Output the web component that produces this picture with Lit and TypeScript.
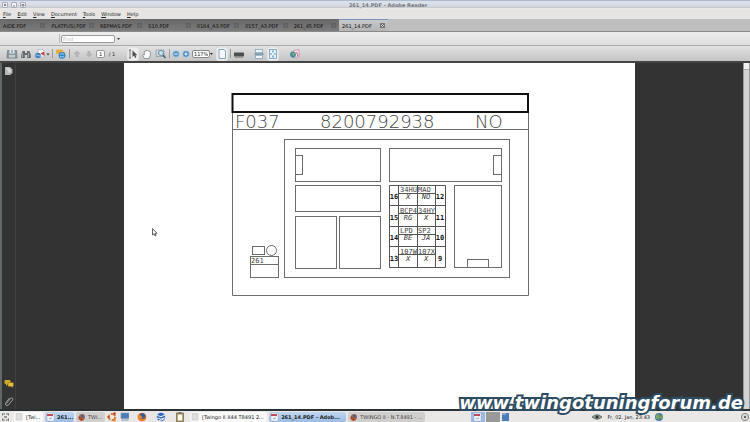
import { LitElement, html, css, svg, nothing } from "lit";
import { customElement, property } from "lit/decorators.js";
import { classMap } from "lit/directives/class-map.js";

const icon = (body: unknown, w = 12) =>
  html`<svg class="icon" width=${w} height="12" viewBox="0 0 ${w} 12" aria-hidden="true">${body}</svg>`;

const pdfIcon = svg`<rect x="2" y="2" width="7" height="8" fill="#eef1f8" stroke="#a9b4c8" stroke-width=".5"/><rect x="2" y="3" width="6" height="2" fill="#c0495a"/><path d="M4 8l3-1" stroke="#99a" stroke-width=".8"/>`;
const blankIcon = svg`<rect x="2" y="2.500" width="6" height="6.500" fill="#dedede" stroke="#c5c5c5" stroke-width=".6"/>`;
const firefoxDim = svg`<circle cx="6" cy="6" r="3" fill="#8d6a60"/><path d="M3 5a3 3 0 0 0 5 3.500L6 7z" fill="#b04a30"/><circle cx="6.500" cy="5" r="1.300" fill="#59627c"/>`;

const art = {
  save: svg`<path d="M1.500 2.500h9l.5 7.500h-10z" fill="#8e999e" stroke="#69757a" stroke-width=".7"/><rect x="3.500" y="2" width="5" height="3.500" fill="#dfe8ea"/><rect x="3" y="7" width="6" height="2.500" fill="#c3cdd0"/><path d="M6 2v3" stroke="#5f7480" stroke-width=".9"/>`,
  find: svg`<path d="M2.500 3h2.500v2h2V3h2.500l1.300 4v3H7.200V7H4.800v3H1.200V7z" fill="#636b6f"/><path d="M2.500 5v4M8.500 5v4" stroke="#b2b9bc" stroke-width=".8"/>`,
  send: svg`<path d="M4 1.500h5l1.500 2V9H4z" fill="#f3f4f6" stroke="#9aa7ba" stroke-width=".6"/><circle cx="4" cy="7.500" r="2.800" fill="#3e82c4"/><path d="M6.500 5.500l3.500-2 .5 4.500z" fill="#cf3b35"/><path d="M2 7l4 1" stroke="#a7d0ef" stroke-width=".8"/><path d="M12.500 5.500h3l-1.500 2z" fill="#333"/>`,
  share: svg`<rect x="1" y="1.500" width="7" height="4.500" rx="1" fill="#e7ad40"/><path d="M8 3l2.500 2L8 7z" fill="#e7ad40"/><circle cx="7" cy="7.300" r="3.400" fill="#3585c6"/><path d="M5 6.500q2-2 4 0M5 8.500q2 1 4 0" stroke="#acd8f4" stroke-width=".9" fill="none"/>`,
  up: svg`<path d="M5 2.500l3.500 3.500h-2v3h-3V6h-2z" fill="#b4b4b4"/>`,
  down: svg`<path d="M5 9.500L8.500 6h-2V3h-3v3h-2z" fill="#b4b4b4"/>`,
  select: svg`<path d="M3 2v8M1.800 2h2.400M1.800 10h2.400" stroke="#555" stroke-width=".8"/><path d="M5.500 2.500v6.500l1.500-1.400 1.200 2.400 1.200-.7-1.100-2.100h2z" fill="#4a4a4a"/>`,
  hand: svg`<path d="M3.500 10.500L1.500 7q.5-1.300 1.800 0V3.500q.9-1.200 1.500 0 0-1.800 1.500-1 1.200-.6 1.500.8 1.500-.4 1.500 1v3.200l-1.300 3z" fill="#fafafa" stroke="#777" stroke-width=".7"/>`,
  marquee: svg`<rect x="1" y="2" width="8" height="6.500" fill="none" stroke="#6a8899" stroke-dasharray="1.500 .7" stroke-width=".8"/><circle cx="6" cy="5" r="2.500" fill="#cce4f0" stroke="#527b94" stroke-width=".8"/><path d="M8 7l2.500 3" stroke="#486578" stroke-width="1.400"/>`,
  minus: svg`<circle cx="4" cy="6" r="3.300" fill="#4c8fc5" stroke="#b4d2e6" stroke-width=".8"/><path d="M2.300 6h3.400" stroke="#fff"/>`,
  plus: svg`<circle cx="4" cy="6" r="3.300" fill="#3e83bd" stroke="#b4d2e6" stroke-width=".8"/><path d="M2.300 6h3.400M4 4.300v3.400" stroke="#fff"/>`,
  page: svg`<path d="M3 1.500h5l1.500 1.500v7.500H3z" fill="#f2f8fd" stroke="#678fae" stroke-width=".8"/>`,
  print: svg`<rect x="3" y="2" width="6" height="3" fill="#d5d5d5"/><rect x="1" y="4.500" width="10" height="4" rx=".6" fill="#4c4f50"/><path d="M2 9.300h8" stroke="#8b8b8b" stroke-width="1"/>`,
  scroll: svg`<rect x="2.500" y="1.500" width="7" height="3.200" fill="#eef5fa" stroke="#7b9eb8" stroke-width=".7"/><path d="M1.500 6h9" stroke="#567f9f" stroke-width="1.200"/><rect x="2.500" y="7.300" width="7" height="3.200" fill="#eef5fa" stroke="#7b9eb8" stroke-width=".7"/>`,
  fit: svg`<rect x="2.500" y="1.500" width="7" height="9" fill="#e7f2fa" stroke="#7299b7" stroke-width=".8"/><path d="M6 2.500v2M6 7.500v2M3.300 6h1.500M7.200 6h1.500" stroke="#3f7faf" stroke-width="1.100"/>`,
  adobe: svg`<path d="M4 3l6-1.500v7L4 10z" fill="#f6e7ef" stroke="#c8809b" stroke-width=".7"/><circle cx="4" cy="6.500" r="2.900" fill="#4286a5"/><path d="M3 4.500l3 1-2 3" fill="#91b95b"/><path d="M7.500 4l1.500 4" stroke="#c83659" stroke-width=".8"/>`,
};

@customElement("menu-strip")
class MenuStrip extends LitElement {
  static styles = css`
    :host { display: block; font: 5px/10px "DejaVu Sans", sans-serif; }
    .title { display: grid; grid-template-columns: 1fr auto 1fr; align-items: center; height: 9px;
      padding: 0 2px 0 28px; background: linear-gradient(#aebccd 0 1px, #dae0ea 1px 4px, #cdd1d9 7px, #c5c5c5 8px, #ebe7e4 8px); }
    h1 { margin: 0; font-size: 5px; color: #757980; }
    .window { display: flex; gap: 3px; margin-left: -26px; }
    .window button { width: 6px; height: 6px; padding: 0; border: 1px solid #a6adb6; border-radius: 1px;
      background: #f1f3f6; display: grid; place-items: center; }
    .menu { display: flex; gap: 6px; padding: 0 3px; height: 10px; background: #e7e5e3; }
    .menu button { border: 0; padding: 0; background: none; font: inherit; color: #222; }
    .menu u { text-underline-offset: 1px; }
  `;
  render() {
    const marks = ["M1 1l2 2M3 1L1 3", "M1 3h2", "M1 1.500h2v1.500H1z"];
    return html`
      <header class="title">
        <div class="window">
          ${["Close", "Minimize", "Maximize"].map((n, i) => html`<button aria-label=${n}>
            <svg width="4" height="4" viewBox="0 0 4 4"><path d=${marks[i]} fill="none" stroke="#666" stroke-width=".8"/></svg></button>`)}
        </div>
        <h1>261_14.PDF - Adobe Reader</h1>
      </header>
      <nav class="menu">
        ${["File", "Edit", "View", "Document", "Tools", "Window", "Help"].map(
          (m) => html`<button><u>${m[0]}</u>${m.slice(1)}</button>`)}
      </nav>`;
  }
}

@customElement("tab-strip")
class TabStrip extends LitElement {
  static styles = css`
    :host { display: flex; height: 13px; background: #bebebe; border-bottom: 1px solid #8a8a8a; box-sizing: border-box;
      font: 5px/12px "DejaVu Sans", sans-serif; }
    .tab { flex: 0 0 6.46%; box-sizing: border-box; display: flex; justify-content: space-between; align-items: center;
      padding: 1px 3px 0; background: linear-gradient(#686868, #7b7b7b); color: #0c0c0c; }
    .active { background: linear-gradient(#c7c9cc, #b4b4b4); border-top: 1px solid #7894b6; padding-top: 0; }
    .name, .close { border: 0; padding: 0; background: none; color: inherit; font: inherit; white-space: nowrap; }
    .close { width: 5px; height: 5px; border: 1px solid #555; color: #444; opacity: .5; display: grid; place-items: center; }
    .active .close { opacity: 1; background: #ddd; border-color: #777; }
  `;
  render() {
    return ["AIDE.PDF", "PLATFUSI.PDF", "REPMAS.PDF", "S10.PDF", "0164_A3.PDF", "0157_A3.PDF", "261_45.PDF", "261_14.PDF"].map(
      (t, i) => html`<div class=${classMap({ tab: true, active: i === 7 })}>
        <button class="name">${t}</button>
        <button class="close" aria-label="Close ${t}"><svg width="3" height="3" viewBox="0 0 3 3"><path d="M0 0l3 3M3 0L0 3" stroke="currentColor" stroke-width=".8"/></svg></button>
      </div>`);
  }
}

@customElement("tool-bars")
class ToolBars extends LitElement {
  static styles = css`
    :host { display: block; font: 5px/8px "DejaVu Sans", sans-serif; color: #222; }
    .find { display: flex; align-items: center; gap: 1px; height: 14px; padding-left: 59px; box-sizing: border-box;
      background: linear-gradient(#ececec, #dedede); border-bottom: 1px solid #ababab; }
    .find::before { content: ""; width: 1px; height: 9px; background: #bbb; }
    input { box-sizing: border-box; height: 8px; border: 1px solid #999; border-radius: 2px; padding: 0 1px;
      font: inherit; background: #fff; color: #222; }
    .find input { width: 54px; }
    .find input::placeholder { color: #bdbdbd; }
    .caret { border: 0; padding: 0; background: none; width: 4px; height: 8px; display: grid; place-items: center; }
    .tools { display: flex; align-items: center; gap: 2px; height: 15px; padding-left: 6px;
      background: linear-gradient(#e2e2e2, #c4c4c4); }
    .tool { flex: none; border: 0; padding: 0; background: none; height: 14px; display: grid; place-items: center; }
    .on { background: #ededed; box-shadow: inset 0 0 1px #999; border-radius: 2px; }
    .sep { width: 1px; height: 9px; background: #999; }
    .page { width: 9px; text-align: center; }
    .total { width: 10px; text-align: center; }
    .gap { width: 6px; }
    .gap.small { width: 4px; }
    .zoom { display: flex; align-items: center; width: 22px; }
    select { appearance: none; width: 18px; height: 8px; border: 1px solid #888; border-radius: 2px;
      padding: 0 1px; font: inherit; line-height: 6px; background: #fff; color: #222; box-sizing: border-box; }
  `;
  private tool(name: keyof typeof art, w = 12, on = false) {
    return html`<button class=${classMap({ tool: true, on })} aria-label=${name}>${icon(art[name], w)}</button>`;
  }
  render() {
    const sep = html`<span class="sep"></span>`;
    const caret = html`<svg width="3" height="2" viewBox="0 0 3 2"><path d="M0 0h3L1.500 2z" fill="#333"/></svg>`;
    return html`
      <div class="find"><input type="search" placeholder="Find" aria-label="Find" /><button class="caret" aria-label="Find options">${caret}</button></div>
      <div class="tools">
        ${this.tool("save")}${this.tool("find")}${this.tool("send", 16)}${sep}
        ${this.tool("share")}${sep}${this.tool("up", 10)}${this.tool("down", 10)}
        <input class="page" aria-label="Page" value="1" /><span class="total">/ 1</span><span class="gap"></span>
        ${this.tool("select", 12, true)}${this.tool("hand")}${this.tool("marquee")}${sep}
        ${this.tool("minus", 8)}${this.tool("plus", 8)}
        <span class="zoom"><select aria-label="Zoom"><option>117%</option></select>${caret}</span>
        ${this.tool("page", 12, true)}${sep}${this.tool("print")}<span class="gap small"></span>
        ${this.tool("scroll")}${this.tool("fit", 12, true)}<span class="gap"></span>${this.tool("adobe")}
      </div>`;
  }
}

@customElement("fuse-sheet")
class FuseSheet extends LitElement {
  static styles = css`
    :host { display: block; background: #fff; }
    svg { display: block; width: 100%; }
    .line { fill: none; stroke: #6c6c6c; stroke-width: 1; }
    .dark { fill: none; stroke: #111; stroke-width: 2; }
    .grid { fill: none; stroke: #555; stroke-width: 1; }
    .head { font: 200 18px "DejaVu Sans", sans-serif; fill: #444; }
    .label { font: 7px "DejaVu Sans Mono", monospace; fill: #444; }
    .code { font: italic 7px "DejaVu Sans Mono", monospace; fill: #333; text-anchor: middle; }
    .num { font: bold 7px "DejaVu Sans Mono", monospace; fill: #111; text-anchor: middle; }
  `;
  render() {
    const boxes = [
      [284, 139, 225, 138], [295, 148, 85, 33], [389, 148, 112, 33], [295, 155, 7, 19], [493, 155, 8, 19],
      [295, 185, 85, 26], [295, 216, 41, 52], [339, 216, 41, 52], [454, 185, 47, 82], [467, 259, 21, 8],
      [252, 246, 12, 8], [250, 256, 28, 21],
    ];
    const rows = [
      ["16", "34HU", "X", "MAO", "NO", "12"],
      ["15", "BCP4", "RG", "34HY", "X", "11"],
      ["14", "LPD", "BE", "SP2", "JA", "10"],
      ["13", "107W", "X", "107X", "X", "9"],
    ];
    return html`<svg viewBox="124 63 511 346" role="img" aria-label="Connector F037">
      <g transform="translate(.5 .5)">
        <path class="line" d="M232 94V295H528V94M232 129H528M250 264h28"/>
        <rect class="line" x="232" y="112" width="296" height="17"/>
        ${boxes.map(([x, y, w, h]) => svg`<rect class="line" x=${x} y=${y} width=${w} height=${h}/>`)}
        <circle class="line" cx="271" cy="250" r="5"/>
        <path class="grid" d="M389 185h56v82h-56zM398 185v82M417 185v82M435 185v82M389 205h56M389 226h56M389 246h56M398 193h37M398 213h37M398 234h37M398 254h37"/>
      </g>
      <path class="dark" d="M232.500 94h295.500v18H232.500z"/>
      <text class="head" x="235" y="128">F037</text>
      <text class="head" x="320" y="128">8200792938</text>
      <text class="head" x="475" y="128">NO</text>
      <text class="label" x="251" y="263">261</text>
      ${rows.map(([l, a, ac, b, bc, r], i) => {
        const y = 185 + i * 20.5;
        return svg`
          <text class="num" x="394" y=${y + 14}>${l}</text>
          <text class="label" x="400" y=${y + 7}>${a}</text>
          <text class="code" x="408" y=${y + 14}>${ac}</text>
          <text class="label" x="418" y=${y + 7}>${b}</text>
          <text class="code" x="426" y=${y + 14}>${bc}</text>
          <text class="num" x="440" y=${y + 14}>${r}</text>`;
      })}
      <path d="M152.500 228.500v6.500l1.500-1.300 1.100 2.300 1-.5-1-2.200h1.900z" fill="#fff" stroke="#222" stroke-width=".7"/>
    </svg>`;
  }
}

@customElement("task-bar")
class TaskBar extends LitElement {
  static styles = css`
    :host { display: flex; align-items: center; gap: 2px; height: 11px; background: #e9e8e7; color: #222;
      font: 5px/10px "DejaVu Sans", sans-serif; padding: 0 0 0 1px; box-sizing: border-box; }
    svg { display: block; flex: none; }
    button { border: 0; padding: 0; background: none; font: inherit; color: inherit; display: flex; align-items: center;
      justify-content: center; flex: none; height: 10px; overflow: hidden; white-space: nowrap; }
    .start { width: 9px; margin-right: 2px; }
    .task { width: 29px; background: #f9f9f9; border-radius: 2px; justify-content: flex-start; }
    .wide { width: 10.3%; }
    .blue { background: linear-gradient(#c0d6f0, #9bbce4); font-weight: bold; }
    .grey { background: #d0cfcd; color: #444; }
    .launch { width: 17px; }
    .pager { display: flex; gap: 1px; margin-left: auto; }
    .desk { width: 14px; background: #999; }
    .desk.blue { background: #9bbbe5; }
    .tray { display: flex; align-items: center; gap: 4px; margin-left: 76px; margin-right: 72px; white-space: nowrap; }
    time { line-height: 6px; padding-top: 1px; }
    .end { width: 10px; }
  `;
  private task(text: string, kind: string, wide: boolean) {
    const pic = kind === "blue" ? pdfIcon : kind === "grey" ? firefoxDim : blankIcon;
    return html`<button class=${classMap({ task: true, wide, blue: kind === "blue", grey: kind === "grey" })}>${icon(pic)}<span>${text}</span></button>`;
  }
  render() {
    const launch = [
      svg`<circle cx="6" cy="6" r="3.200" fill="none" stroke="#d87a35" stroke-width="1.800" stroke-dasharray="5.300 1.400"/><circle cx="2.500" cy="6" r="1.200" fill="#c54a2a"/><circle cx="8.500" cy="2.500" r="1.200" fill="#b83a28"/><circle cx="8.500" cy="9.500" r="1.200" fill="#e08a3a"/>`,
      svg`<rect x="2" y="2" width="8" height="5.500" fill="#4c7db9" stroke="#869bb5" stroke-width=".7"/><rect x="2.500" y="8" width="7" height="2" fill="#b5bdc7"/>`,
      svg`<circle cx="6" cy="6" r="4.300" fill="#dd6425"/><circle cx="6.500" cy="5" r="2.700" fill="#365b9b"/><path d="M1.700 4q3-1 3 1l2 1q-1 2-3 1.500 3 2.500 6-1-1 4-4.500 3.700Q1.500 9.500 1.700 4z" fill="#e88628"/>`,
      svg`<circle cx="6" cy="6" r="4.300" fill="#3569bd"/><path d="M2 4.500q4 2.500 8-.5M2 7q4 2.500 8-.3M4 9.500q3 0 5-2" stroke="#fff" fill="none" stroke-width=".9"/>`,
      svg`<rect x="2.500" y="2" width="7" height="8.500" fill="#a18d59" stroke="#74643c" stroke-width=".7"/><rect x="3.700" y="3.500" width="4.600" height="6" fill="#f7f7ef"/><rect x="4.500" y="1" width="3" height="2" fill="#777"/>`,
    ];
    return html`
      <button class="start" aria-label="Show desktop">${icon(svg`<path d="M1 3h3M1 9h3M8 3h-3M8 9h-3M1.500 2.500v2M1.500 7.500v2M7.500 2.500v2M7.500 7.500v2" stroke="#777"/><rect x="3" y="5" width="3" height="2" fill="#999"/>`, 9)}</button>
      ${this.task("[Twi...", "", false)}${this.task("261...", "blue", false)}${this.task("TWI...", "grey", false)}
      ${["Ubuntu", "Desktop", "Firefox", "Google Earth", "Clipboard"].map((n, i) => html`<button class=${i < 2 ? "start" : "launch"} aria-label=${n}>${icon(launch[i])}</button>`)}
      ${this.task("[Twingo II X44 T8491 2...", "", true)}${this.task("261_14.PDF - Adob...", "blue", true)}${this.task("TWINGO II - N.T.8491 - ...", "grey", true)}
      <div class="pager"><button class="desk blue" aria-label="Workspace 1">${icon(pdfIcon)}</button><button class="desk" aria-label="Workspace 2"></button>
      <button aria-label="Documents">${icon(svg`<rect x="1" y="2" width="7" height="8" fill="#4d7cb9"/><path d="M1 2h4v2H1z" fill="#86a9d4"/>`)}</button></div>
      <div class="tray">${icon(svg`<path d="M1 6q5-4.500 10 0-5 4.500-10 0z" fill="#8d9991" stroke="#5c645f" stroke-width=".8"/><circle cx="6" cy="6" r="1.500" fill="#333"/>`)}
        <time>Fr, 02. Jan, 23:43</time>
        ${icon(svg`<circle cx="5" cy="6" r="4" fill="#4a79a5"/><path d="M2 4l3-1 1 3-2 3-2-2zM7 4l2 1-1 4-2-2z" fill="#7da461"/>`)}</div>
      <button class="end" aria-label="Settings">${icon(svg`<circle cx="5" cy="6" r="3.600" fill="#ddd" stroke="#888"/><circle cx="5" cy="6" r="1.200" fill="#666"/>`, 10)}</button>`;
  }
}

@customElement("app-root")
class AppRoot extends LitElement {
  @property() site = "www.twingotuningforum.de";
  static styles = css`
    :host { display: flex; flex-direction: column; height: 100vh; position: relative; overflow: hidden; background: #333; }
    menu-strip, tab-strip, tool-bars, task-bar { flex: none; }
    main { flex: 1; min-height: 0; display: flex; border: solid #444; border-width: 2px 0; border-bottom-color: #293133; }
    .side { width: 16px; box-sizing: border-box; border-left: 2px solid #62686a; border-right: 1px solid #414141;
      display: flex; flex-direction: column; align-items: center; padding: 2px 0 2px; gap: 5px; }
    .side button { border: 0; padding: 0; background: none; height: 12px; }
    .side .first { margin-bottom: auto; }
    .view { flex: 1; min-width: 0; padding: 0 14.4%; display: flex; }
    fuse-sheet { flex: 1; min-width: 0; overflow: hidden; }
    .bar { width: 7px; box-sizing: border-box; background: #d3d3d3; border: solid #999; border-width: 0 1px; }
    .bar::before { content: ""; display: block; height: 6px; background: #f2f2f2; border-bottom: 1px solid #aaa; }
    .mark { position: absolute; right: 7px; bottom: 8px; color: #fff; text-decoration: none; white-space: nowrap;
      font: italic bold 18px/22px "DejaVu Sans", sans-serif; -webkit-text-stroke: 4px #2e4c61; paint-order: stroke fill; }
  `;
  render() {
    return html`
      <menu-strip></menu-strip><tab-strip></tab-strip><tool-bars></tool-bars>
      <main>
        <aside class="side">
          <button class="first" aria-label="Pages">${icon(svg`<path d="M2 2h5l2.500 2.500V8L7 10H2z" fill="#b7b7b7"/><path d="M3 3h3l2 2v2l-2 1" fill="#d5d5d5"/>`)}</button>
          <button aria-label="Comments">${icon(svg`<rect x="1.500" y="2" width="6" height="4" rx="1" fill="#d0ab25"/><rect x="5" y="4.500" width="5.500" height="4" rx="1" fill="#e3c13c" stroke="#776118" stroke-width=".5"/><path d="M3 6v2l2-2M8 8.500l1.500 1.500V8z" fill="#d0ab25"/>`)}</button>
          <button aria-label="Attachments">${icon(svg`<path d="M3.500 8.500l4-5q1.500-1.500 2.300 0 .4.700-.4 1.700L5.500 10q-1.700 1.300-2.800 0-.7-1.200.2-2.300L6.500 3" fill="none" stroke="#aaa" stroke-width=".9"/>`)}</button>
        </aside>
        <div class="view"><fuse-sheet></fuse-sheet></div>
        <div class="bar"></div>
      </main>
      <task-bar></task-bar>
      ${this.site ? html`<a class="mark" href="#">${this.site}</a>` : nothing}`;
  }
}
